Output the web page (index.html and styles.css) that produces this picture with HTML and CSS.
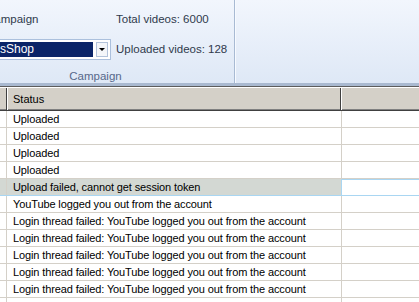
FILE: index.html
```html
<!DOCTYPE html>
<html lang="en">
<head>
    <meta charset="UTF-8">
    <title>Uploader</title>
    <link rel="stylesheet" href="styles.css">
</head>
<body>

    <div class="ribbon">
        <div class="group">
            <div class="group-body">
                <div class="col-left">
                    <div class="label">Campaign</div>
                    <div class="combo">
                        <div class="combo-text">sShop</div>
                        <div class="combo-btn"><span class="arrow"></span></div>
                    </div>
                </div>
                <div class="col-right">
                    <div class="label">Total videos: 6000</div>
                    <div class="label label-second">Uploaded videos: 128</div>
                </div>
            </div>
            <div class="caption">Campaign</div>
        </div>
        <div class="group-empty"></div>
    </div>

    <div class="grid">
        <div class="head">
            <div class="hcell h-first"></div>
            <div class="hcell h-status">Status</div>
            <div class="hcell h-rest"></div>
        </div>
        <div class="row"><div class="c-first"></div><div class="c-status">Uploaded</div><div class="c-rest"></div></div>
        <div class="row"><div class="c-first"></div><div class="c-status">Uploaded</div><div class="c-rest"></div></div>
        <div class="row"><div class="c-first"></div><div class="c-status">Uploaded</div><div class="c-rest"></div></div>
        <div class="row"><div class="c-first"></div><div class="c-status">Uploaded</div><div class="c-rest"></div></div>
        <div class="row selected"><div class="c-first"></div><div class="c-status">Upload failed, cannot get session token</div><div class="c-rest"></div></div>
        <div class="row"><div class="c-first"></div><div class="c-status">YouTube logged you out from the account</div><div class="c-rest"></div></div>
        <div class="row"><div class="c-first"></div><div class="c-status">Login thread failed: YouTube logged you out from the account</div><div class="c-rest"></div></div>
        <div class="row"><div class="c-first"></div><div class="c-status">Login thread failed: YouTube logged you out from the account</div><div class="c-rest"></div></div>
        <div class="row"><div class="c-first"></div><div class="c-status">Login thread failed: YouTube logged you out from the account</div><div class="c-rest"></div></div>
        <div class="row"><div class="c-first"></div><div class="c-status">Login thread failed: YouTube logged you out from the account</div><div class="c-rest"></div></div>
        <div class="row"><div class="c-first"></div><div class="c-status">Login thread failed: YouTube logged you out from the account</div><div class="c-rest"></div></div>
        <div class="row"><div class="c-first"></div><div class="c-status"></div><div class="c-rest"></div></div>
    </div>

</body>
</html>
```

FILE: styles.css
```css
body{
    margin: 0;
    width: 419px;
    height: 302px;
    overflow: hidden;
    background-color: white;
    font-family: "Liberation Sans", Arial, sans-serif;
    font-size: 11px;
}

.ribbon{
    height: 83px;
    display: flex;
    overflow: hidden;
    background: linear-gradient(#f2f6fd, #dee8f6);
    border-bottom: 3px solid #a9b9d0;
}
.group{
    margin-left: -43px;
    width: 277px;
    flex-shrink: 0;
    display: flex;
    flex-direction: column;
    border-right: 1px solid #a8bad3;
}
.group-empty{
    flex: 1;
    border-left: 1px solid #f7faff;
}
.group-body{
    height: 69px;
    display: flex;
}
.col-left{
    width: 128px;
    margin-left: 26px;
    margin-right: 5px;
}
.label{
    margin-top: 11px;
    line-height: 16px;
    height: 16px;
    color: #2f3a4c;
    white-space: nowrap;
    font-size: 11.5px;
}
.col-left .label{
    padding-left: 3px;
}
.label-second{
    margin-top: 14px;
}
.combo{
    margin-top: 12px;
    height: 15px;
    padding: 2px;
    border: 1px solid #abc0dd;
    background-color: white;
    display: flex;
}
.combo-text{
    width: 107px;
    padding-left: 14px;
    box-sizing: border-box;
    background-color: #0a2468;
    color: white;
    line-height: 15px;
    font-size: 12px;
}
.combo-btn{
    width: 12px;
    margin-left: 3px;
    box-sizing: border-box;
    border: 1px solid #b3c3da;
    background-color: #f4f6f9;
    display: flex;
    align-items: center;
    justify-content: center;
}
.arrow{
    width: 0;
    height: 0;
    border-left: 3px solid transparent;
    border-right: 3px solid transparent;
    border-top: 3px solid black;
}
.caption{
    height: 14px;
    line-height: 14px;
    text-align: center;
    color: #56688a;
    font-size: 11.5px;
}

.grid{
    border-top: 1px solid #5c5c5c;
    padding-top: 1px;
}
.head{
    display: flex;
    height: 23px;
    background-color: #d4d0c8;
    border-bottom: 1px solid #404040;
    box-shadow: inset 0 -1px #808080;
    box-sizing: border-box;
}
.hcell{
    line-height: 22px;
    height: 22px;
    box-sizing: border-box;
}
.h-first{
    width: 7px;
    border-right: 1px solid #404040;
}
.h-status{
    width: 334px;
    padding-left: 6px;
    border-right: 1px solid #404040;
    box-shadow: inset 1px 0 #ffffff;
    color: black;
}
.h-rest{
    flex: 1;
    box-shadow: inset 1px 0 #ffffff;
}

.row{
    display: flex;
    height: 17px;
    box-sizing: border-box;
    border-bottom: 1px solid #d4d0c8;
    line-height: 15px;
}
.c-first{
    width: 7px;
    box-sizing: border-box;
    border-right: 1px solid #d4d0c8;
}
.c-status{
    width: 335px;
    box-sizing: border-box;
    padding-left: 6px;
    padding-top: 1px;
    border-right: 1px solid #d4d0c8;
    white-space: nowrap;
    overflow: hidden;
    letter-spacing: -0.12px;
}
.c-rest{
    flex: 1;
}
.row.selected .c-first,
.row.selected .c-status{
    background-color: #d3d8d3;
}
.row.selected{
    border-bottom-color: #a9d6f2;
    box-shadow: inset 0 1px #a9d6f2;
}
.row.selected .c-status{
    border-right-color: #a9d6f2;
}
```
